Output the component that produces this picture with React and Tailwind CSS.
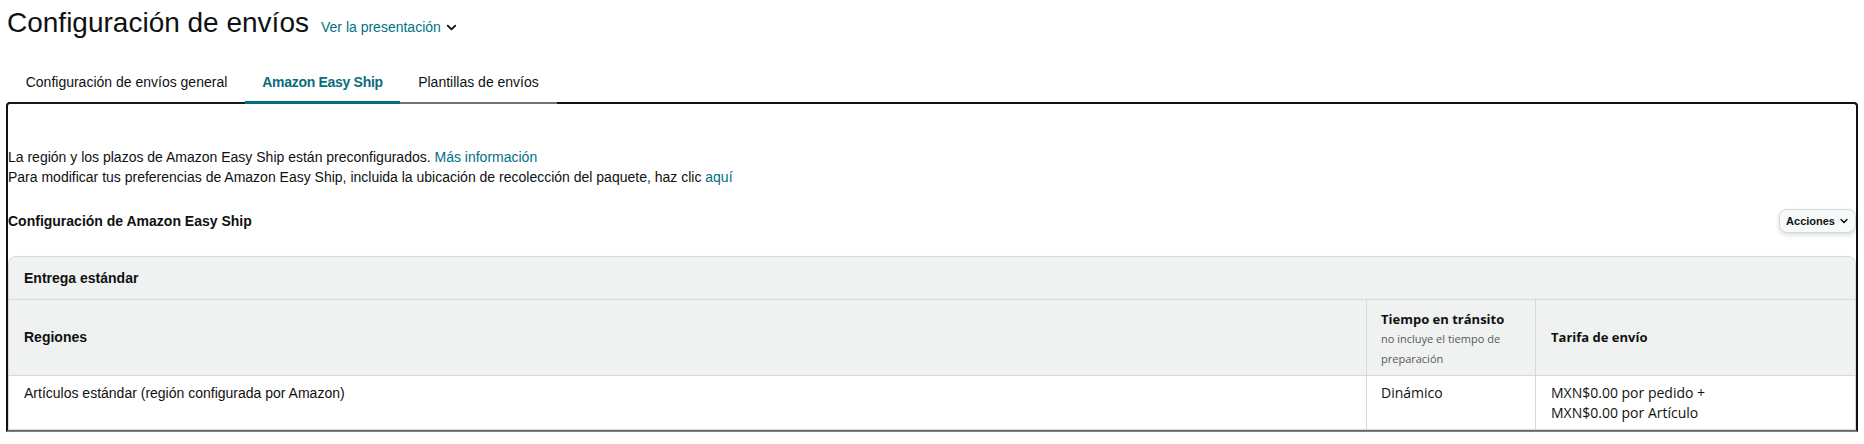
import React from 'react';
import { ChevronDown } from 'lucide-react';

const tabs = [
    { label: 'Configuración de envíos general', active: false, width: 'w-[237px]', line: 'border-[#1a1a1a]' },
    { label: 'Amazon Easy Ship', active: true, width: 'w-[155px]', line: 'border-[#00707e]' },
    { label: 'Plantillas de envíos', active: false, width: 'w-[157px]', line: 'border-[#6f7373]' },
];

export default function App() {
    return (
        <div className="w-[1864px] h-[444px] overflow-hidden bg-white text-[#0f1111] font-['Liberation_Sans',Arial,sans-serif]">
            {/* Page title */}
            <div className="flex items-baseline pl-[7px] pt-[5px]">
                <h1 className="text-[28px] leading-[36px]">Configuración de envíos</h1>
                <button className="ml-[12px] flex items-center gap-[3px] text-[14px] leading-[20px] text-[#007185]">
                    Ver la presentación
                    <ChevronDown size={15} strokeWidth={3} className="text-[#0f1111] mt-[1px]" />
                </button>
            </div>

            {/* Tabs */}
            <div className="relative z-10 -mb-[2px] mt-[21px] flex pl-[8px]">
                {tabs.map((t) => (
                    <div
                        key={t.label}
                        className={`h-[42px] ${t.width} flex items-center justify-center whitespace-nowrap text-[14px] leading-[20px] ${t.active ? 'border-b-[3px] font-bold text-[#0a6d7b] tracking-[-0.3px] pt-[1px]' : 'border-b-[2px]'} ${t.line}`}
                    >
                        {t.label}
                    </div>
                ))}
            </div>

            {/* Content box */}
            <div className="mx-[6px] border-2 border-[#111111] border-b-[#8c8c8c] rounded-t-[4px] pt-[43px]">
                <p className="text-[14px] leading-[20px]">
                    La región y los plazos de Amazon Easy Ship están preconfigurados.{' '}
                    <a className="text-[#007185]">Más información</a>
                </p>
                <p className="text-[14px] leading-[20px]">
                    Para modificar tus preferencias de Amazon Easy Ship, incluida la ubicación de recolección del paquete, haz clic{' '}
                    <a className="text-[#007185]">aquí</a>
                </p>

                <div className="mt-[22px] flex items-center justify-between h-[24px]">
                    <h2 className="text-[14px] font-bold leading-[20px]">Configuración de Amazon Easy Ship</h2>
                    <button className="h-[24px] pl-[6px] pr-[5px] flex items-center gap-[3px] rounded-[8px] border border-[#d5d9d9] bg-[#f7fafa] shadow-[0_2px_5px_rgba(15,17,17,0.15)] text-[11px] font-bold">
                        Acciones
                        <ChevronDown size={12} strokeWidth={3} />
                    </button>
                </div>

                {/* Table */}
                <div className="mt-[23px] rounded-t-[8px] border border-[#d5d9d9] overflow-hidden shadow-[0_1px_2px_rgba(0,0,0,0.35)]">
                    <div className="h-[43px] px-[15px] flex items-center bg-[#f0f2f2] border-b border-[#d5d9d9] text-[14px] font-bold">
                        Entrega estándar
                    </div>

                    <div className="grid grid-cols-[1fr_169px_320px] h-[76px] bg-[#f0f2f2] border-b border-[#d5d9d9]">
                        <div className="px-[15px] flex items-center text-[14px] font-bold">Regiones</div>
                        <div className="border-l border-[#d5d9d9] pl-[14px] pt-[9px] font-['Open_Sans',sans-serif]">
                            <div className="text-[13px] font-bold leading-[20px]">Tiempo en tránsito</div>
                            <div className="text-[11px] leading-[20px] text-[#565959]">no incluye el tiempo de</div>
                            <div className="text-[11px] leading-[20px] text-[#565959]">preparación</div>
                        </div>
                        <div className="border-l border-[#d5d9d9] pl-[15px] flex items-center text-[13px] font-bold font-['Open_Sans',sans-serif]">
                            Tarifa de envío
                        </div>
                    </div>

                    <div className="grid grid-cols-[1fr_169px_320px] h-[53px] bg-white">
                        <div className="px-[15px] pt-[7px] text-[14px] leading-[20px]">
                            Artículos estándar (región configurada por Amazon)
                        </div>
                        <div className="border-l border-[#d5d9d9] pl-[14px] pt-[7px] text-[14px] leading-[20px] font-['Open_Sans',sans-serif]">
                            Dinámico
                        </div>
                        <div className="border-l border-[#d5d9d9] pl-[15px] pt-[7px] text-[14px] leading-[20px] font-['Open_Sans',sans-serif]">
                            <div>MXN$0.00 por pedido +</div>
                            <div>MXN$0.00 por Artículo</div>
                        </div>
                    </div>
                </div>
            </div>
        </div>
    );
}
